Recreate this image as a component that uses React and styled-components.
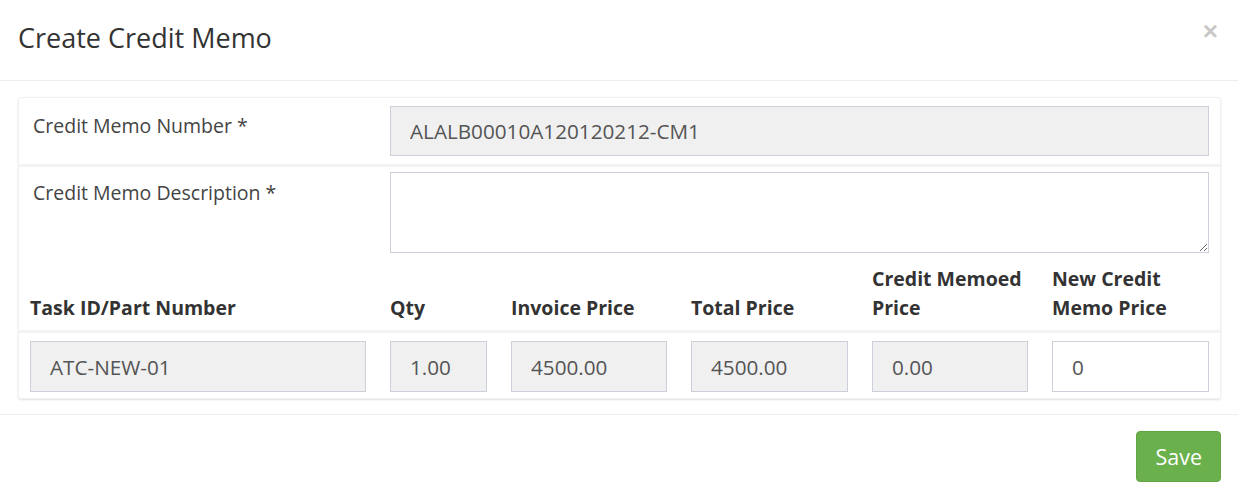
import React from "react";
import styled, { createGlobalStyle } from "styled-components";

const Global = createGlobalStyle`
  html, body { margin: 0; padding: 0; background: #fff; }
  body { font-family: "Open Sans", "Liberation Sans", sans-serif; color: #444; }
  * { box-sizing: border-box; }
`;

const Modal = styled.div`
  width: 1238px;
  background: #fff;
`;

const Header = styled.div`
  display: flex;
  align-items: center;
  justify-content: space-between;
  height: 81px;
  padding: 0 18px;
  border-bottom: 1px solid #eeeeee;
`;

const Title = styled.h4`
  margin: 0;
  font-size: 27px;
  font-weight: 400;
  color: #333;
  padding-bottom: 5px;
`;

const Close = styled.button`
  border: 0;
  background: none;
  padding: 0;
  margin-top: -18px;
  margin-right: 2px;
  font-family: "Liberation Sans", sans-serif;
  font-size: 26px;
  font-weight: 700;
  color: #c8c8c8;
  line-height: 1;
  cursor: pointer;
`;

const Body = styled.div`
  padding: 16px 17px 15px 18px;
  border-bottom: 1px solid #eeeeee;
`;

const Panel = styled.div`
  border: 1px solid #f1f1f1;
  border-radius: 3px;
  box-shadow: 0 1px 2px rgba(0, 0, 0, 0.12);
`;

const FormRow = styled.div`
  display: grid;
  grid-template-columns: 357px 1fr;
  padding: ${(p) => p.$pad || "8px"} 11px 8px 14px;
  border-top: ${(p) => (p.$first ? "0" : "3px solid #f3f3f3")};
  min-height: ${(p) => p.$min || "auto"};
`;

const Label = styled.label`
  font-size: 19.5px;
  color: #444;
  padding-top: ${(p) => p.$top || "6px"};
`;

const baseField = `
  width: 100%;
  font-family: "Open Sans", "Liberation Sans", sans-serif;
  font-size: 20.7px;
  color: #555;
  border: 1px solid #ccd0d9;
  border-radius: 0;
  outline: none;
`;

const TextInput = styled.input`
  ${baseField}
  height: ${(p) => p.$h || "50px"};
  padding: 0 19px;
  background: ${(p) => (p.readOnly ? "#f0f0f0" : "#fff")};
`;

const TextArea = styled.textarea`
  ${baseField}
  height: 81px;
  padding: 8px 19px;
  background: #fff;
  resize: vertical;
  display: block;
`;

const Table = styled.table`
  width: 100%;
  border-collapse: collapse;
`;

const Th = styled.th`
  text-align: left;
  vertical-align: bottom;
  font-size: 19.5px;
  font-weight: 700;
  color: #333;
  line-height: 29px;
  padding: 0 ${(p) => (p.$last ? "11px" : "13px")} 8px 11px;
  border-bottom: 3px solid #f3f3f3;
  width: ${(p) => p.$w};
`;

const Td = styled.td`
  padding: 8px ${(p) => (p.$last ? "11px" : "13px")} 6px 11px;
`;

const Footer = styled.div`
  display: flex;
  justify-content: flex-end;
  padding: 16px 17px;
`;

const SaveButton = styled.button`
  background: #6ab04c;
  color: #fff;
  border: 1px solid #62a545;
  border-radius: 4px;
  font-family: "Open Sans", "Liberation Sans", sans-serif;
  font-size: 21.5px;
  height: 51px;
  padding: 0 18px;
  cursor: pointer;
`;

const columns = [
  { title: "Task ID/Part Number", w: "360px", value: "ATC-NEW-01", ro: true },
  { title: "Qty", w: "121px", value: "1.00", ro: true },
  { title: "Invoice Price", w: "180px", value: "4500.00", ro: true },
  { title: "Total Price", w: "181px", value: "4500.00", ro: true },
  { title: ["Credit Memoed", "Price"], w: "180px", value: "0.00", ro: true },
  { title: ["New Credit", "Memo Price"], w: "auto", value: "0", ro: false },
];

export default function App() {
  return (
    <Modal>
      <Global />
      <Header>
        <Title>Create Credit Memo</Title>
        <Close aria-label="Close">×</Close>
      </Header>
      <Body>
        <Panel>
          <FormRow $first>
            <Label>Credit Memo Number *</Label>
            <TextInput readOnly value="ALALB00010A120120212-CM1" />
          </FormRow>
          <FormRow $min="100px" $pad="5px">
            <Label $top="7px">Credit Memo Description *</Label>
            <TextArea />
          </FormRow>
          <Table>
            <thead>
              <tr>
                {columns.map((c, i) => (
                  <Th key={i} $w={c.w} $last={i === columns.length - 1}>
                    {Array.isArray(c.title) ? (
                      <>
                        {c.title[0]}
                        <br />
                        {c.title[1]}
                      </>
                    ) : (
                      c.title
                    )}
                  </Th>
                ))}
              </tr>
            </thead>
            <tbody>
              <tr>
                {columns.map((c, i) => (
                  <Td key={i} $last={i === columns.length - 1}>
                    <TextInput $h="51px" readOnly={c.ro} defaultValue={c.value} />
                  </Td>
                ))}
              </tr>
            </tbody>
          </Table>
        </Panel>
      </Body>
      <Footer>
        <SaveButton>Save</SaveButton>
      </Footer>
    </Modal>
  );
}
